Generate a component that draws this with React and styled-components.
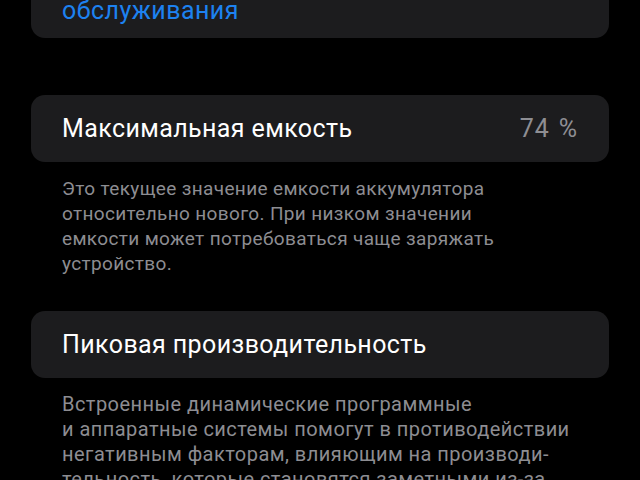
import React from "react";
import styled, { createGlobalStyle } from "styled-components";

const GlobalStyle = createGlobalStyle`
  html, body {
    margin: 0;
    padding: 0;
    background: #000;
  }
  body {
    font-family: Roboto, "Liberation Sans", sans-serif;
    -webkit-font-smoothing: antialiased;
  }
`;

const Screen = styled.div`
  width: 640px;
  height: 480px;
  overflow: hidden;
  background: #000;
`;

const Page = styled.div`
  display: flex;
  flex-direction: column;
  padding: 0 31px;
  margin-top: -22px;
`;

const Card = styled.div`
  display: flex;
  align-items: center;
  justify-content: space-between;
  min-height: ${(p) => p.$height || 67}px;
  padding: ${(p) => p.$pad || "0 31px"};
  box-sizing: border-box;
  background: #1c1c1e;
  border-radius: 14px;
  margin-top: ${(p) => p.$gap || 0}px;
`;

const Title = styled.span`
  font-size: 25px;
  line-height: 30px;
  color: #fff;
  letter-spacing: 0.4px;
`;

const Value = styled.span`
  font-size: 25px;
  line-height: 30px;
  color: #8e8e93;
  letter-spacing: 0.9px;
  word-spacing: 2px;
`;

const Link = styled.span`
  font-size: 25px;
  line-height: 30px;
  color: #1d82f0;
  letter-spacing: 0.45px;
`;

const Footer = styled.p`
  margin: 14px 0 0;
  padding: 0 31px;
  font-size: ${(p) => (p.$wide ? 20 : 19)}px;
  line-height: 25px;
  color: #8d8d92;
  letter-spacing: ${(p) => (p.$wide ? 0.45 : 0.35)}px;
`;

export default function App() {
  return (
    <Screen>
      <GlobalStyle />
      <Page>
        <Card $height={58} $pad="18px 31px 12px">
          <Link>обслуживания</Link>
        </Card>

        <Card $gap={57}>
          <Title>Максимальная емкость</Title>
          <Value>74 %</Value>
        </Card>
        <Footer>
          Это текущее значение емкости аккумулятора
          <br />
          относительно нового. При низком значении
          <br />
          емкости может потребоваться чаще заряжать
          <br />
          устройство.
        </Footer>

        <Card $gap={35}>
          <Title>Пиковая производительность</Title>
        </Card>
        <Footer $wide>
          Встроенные динамические программные
          <br />
          и аппаратные системы помогут в противодействии
          <br />
          негативным факторам, влияющим на производи-
          <br />
          тельность, которые становятся заметными из-за
          <br />
          естественного износа аккумулятора.
        </Footer>
      </Page>
    </Screen>
  );
}
